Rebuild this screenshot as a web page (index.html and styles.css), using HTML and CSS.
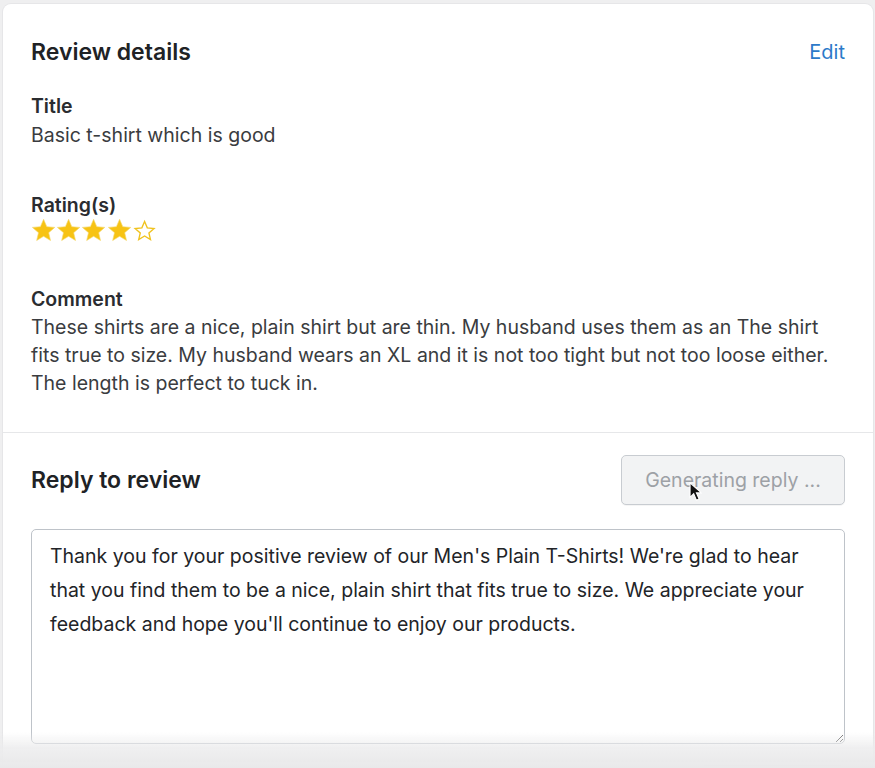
FILE: index.html
```html
<!DOCTYPE html>
<html lang="en">
<head>
<meta charset="utf-8">
<title>Review details</title>
<link rel="stylesheet" href="styles.css">
</head>
<body>
<div class="page">
  <div class="card">
    <section class="section details">
      <div class="section-head">
        <h2 class="heading">Review details</h2>
        <a class="edit" href="#">Edit</a>
      </div>
      <div class="field field-title">
        <div class="label">Title</div>
        <div class="value">Basic t-shirt which is good</div>
      </div>
      <div class="field">
        <div class="label">Rating(s)</div>
        <div class="stars">
          <svg class="star" viewBox="0 0 24 24"><path class="full" d="M12 1.2l3.05 7.1 7.7.7-5.850 5.05 1.75 7.55L12 17.6l-6.65 4 1.75-7.55L1.25 9l7.7-.7z"/></svg>
          <svg class="star" viewBox="0 0 24 24"><path class="full" d="M12 1.2l3.05 7.1 7.7.7-5.85 5.05 1.75 7.55L12 17.6l-6.65 4 1.75-7.55L1.25 9l7.7-.7z"/></svg>
          <svg class="star" viewBox="0 0 24 24"><path class="full" d="M12 1.2l3.05 7.1 7.7.7-5.85 5.05 1.75 7.55L12 17.6l-6.65 4 1.75-7.55L1.25 9l7.7-.7z"/></svg>
          <svg class="star" viewBox="0 0 24 24"><path class="full" d="M12 1.2l3.05 7.1 7.7.7-5.85 5.05 1.75 7.55L12 17.6l-6.65 4 1.75-7.55L1.25 9l7.7-.7z"/></svg>
          <svg class="star" viewBox="0 0 24 24"><path class="empty" d="M12 3.4l2.6 6.05 6.5.6-4.95 4.25 1.5 6.4L12 17.3l-5.65 3.4 1.5-6.4L2.9 10.05l6.5-.6z"/></svg>
        </div>
      </div>
      <div class="field">
        <div class="label">Comment</div>
        <div class="value comment">These shirts are a nice, plain shirt but are thin. My husband uses them as an The shirt fits true to size. My husband wears an XL and it is not too tight but not too loose either. The length is perfect to tuck in.</div>
      </div>
    </section>
    <section class="section reply">
      <div class="section-head reply-head">
        <h2 class="heading">Reply to review</h2>
        <button class="btn-generating" type="button" disabled>Generating reply ...</button>
      </div>
      <textarea class="reply-text">Thank you for your positive review of our Men's Plain T-Shirts! We're glad to hear that you find them to be a nice, plain shirt that fits true to size. We appreciate your feedback and hope you'll continue to enjoy our products.</textarea>
      <div class="actions">
        <button class="btn-publish" type="button">Publish reply</button>
      </div>
    </section>
  </div>
</div>
<svg class="cursor" viewBox="0 0 14 22" width="13" height="20"><path d="M1 1v16l4-4 3 7 3-1.3-3-6.7h5.5z" fill="#111" stroke="#fff" stroke-width="1.2"/></svg>
<div class="bottom-fade"></div>
</body>
</html>
```
FILE: styles.css
```css
* { box-sizing: border-box; }

html, body {
  margin: 0;
  padding: 0;
}

body {
  background: #efeff0;
  font-family: Inter, "Noto Sans", sans-serif;
  color: #303236;
  overflow: hidden;
  height: 768px;
}

.page {
  padding: 4px 2px 0 3px;
}

.card {
  background: #fff;
  border-radius: 8px;
  box-shadow: 0 0 0 1px #e6e6e8;
}

.section {
  padding: 0 28px;
}

.details {
  padding-top: 33px;
  padding-bottom: 35px;
}

.section-head {
  display: flex;
  justify-content: space-between;
  align-items: center;
}

.heading {
  margin: 0;
  font-size: 23px;
  line-height: 30px;
  font-weight: 600;
  color: #202225;
}

.edit {
  color: #2c7ac9;
  text-decoration: none;
  font-size: 20px;
  line-height: 30px;
}

.field {
  margin-top: 44px;
}

.field-title {
  margin-top: 27px;
}

.label {
  font-size: 19.5px;
  line-height: 24px;
  font-weight: 600;
  color: #2a2c30;
}

.value {
  margin-top: 3px;
  font-size: 19.5px;
  line-height: 28px;
  color: #3a3c40;
}

.comment {
  margin-top: 2px;
}

.stars {
  display: flex;
  margin-top: 1px;
  height: 25px;
}

.star {
  width: 25.2px;
  height: 25px;
}

.star .full {
  fill: #f7c314;
  stroke: #f3d86e;
  stroke-width: 0.6;
}

.star .empty {
  fill: #fff;
  stroke: #f0c21d;
  stroke-width: 1.3;
}

.reply {
  border-top: 1px solid #e6e7e9;
  padding-top: 22px;
  padding-bottom: 30px;
}

.btn-generating {
  width: 224px;
  height: 50px;
  background: #f2f3f4;
  border: 1px solid #c8ccd1;
  border-radius: 5px;
  color: #9da1a6;
  font-family: Inter, "Noto Sans", sans-serif;
  font-size: 19.5px;
  box-shadow: 0 1px 0 rgba(0,0,0,0.04);
}

.reply-text {
  display: block;
  width: 100%;
  height: 215px;
  margin-top: 24px;
  padding: 9px 18px;
  border: 1px solid #bec3c9;
  border-radius: 5px;
  font-family: Inter, "Noto Sans", sans-serif;
  font-size: 19.5px;
  line-height: 34px;
  color: #222428;
  resize: both;
  background: #fff;
}

.actions {
  display: flex;
  justify-content: flex-end;
  margin-top: 21px;
}

.btn-publish {
  width: 145px;
  height: 44px;
  background: #fff;
  border: 1px solid #c8ccd1;
  border-radius: 5px;
  font-family: Inter, "Noto Sans", sans-serif;
  font-size: 19.5px;
  color: #303236;
}

.bottom-fade {
  position: fixed;
  left: 0;
  right: 0;
  bottom: 0;
  height: 36px;
  background: linear-gradient(to bottom, rgba(236,236,237,0) 0%, rgba(236,236,237,0.85) 45%, #e9e9ea 100%);
  pointer-events: none;
}

.cursor {
  position: fixed;
  left: 689px;
  top: 482px;
}
```
